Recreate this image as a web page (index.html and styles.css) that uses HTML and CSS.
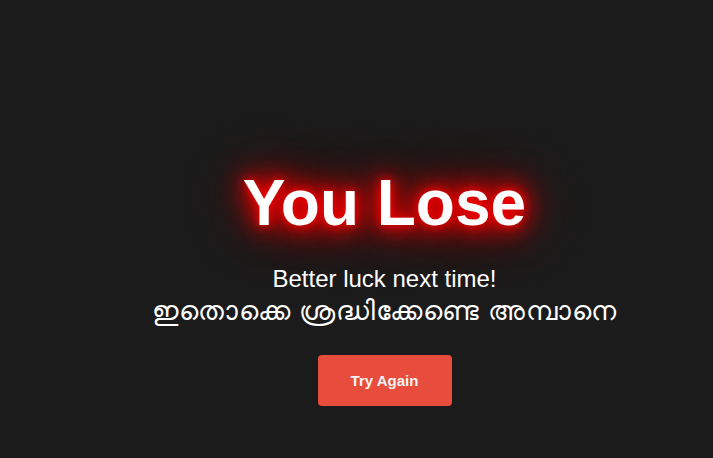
FILE: index.html
```html
<!DOCTYPE html>
<html>
<head>
<meta charset="utf-8">
<link rel="stylesheet" href="styles.css">
</head>
<body>
<div class="screen">
  <h1 class="title">You Lose</h1>
  <p class="message">Better luck next time!<br><span class="ml">ഇതൊക്കെ ശ്രദ്ധിക്കേണ്ടെ അമ്പാനെ</span></p>
  <button class="retry">Try Again</button>
</div>
</body>
</html>
```
FILE: styles.css
```css
html, body {
  margin: 0;
  padding: 0;
  background: #1b1b1b;
  height: 100%;
}
body {
  font-family: "Liberation Sans", Arial, sans-serif;
  color: #ffffff;
}
.screen {
  display: flex;
  flex-direction: column;
  align-items: center;
  padding-top: 166px;
  padding-left: 56px;
}
.title {
  margin: 0;
  font-size: 64px;
  line-height: 74px;
  font-weight: bold;
  text-shadow: 0 0 10px #ff0000, 0 0 20px #ff0000, 0 0 30px #ee0000, 0 0 40px #cc0000, 0 0 60px #990000;
}
.message {
  margin: 24px 0 0;
  font-size: 24px;
  line-height: 30px;
  text-align: center;
}
.ml {
  display: inline-block;
  font-size: 27px;
  letter-spacing: 0.9px;
  padding-top: 2px;
}
.retry {
  margin-top: 28px;
  width: 134px;
  height: 51px;
  border: none;
  border-radius: 4px;
  background: #e74c3c;
  color: #f4f4f4;
  font-family: "Liberation Sans", Arial, sans-serif;
  font-size: 15px;
  font-weight: bold;
}
```
